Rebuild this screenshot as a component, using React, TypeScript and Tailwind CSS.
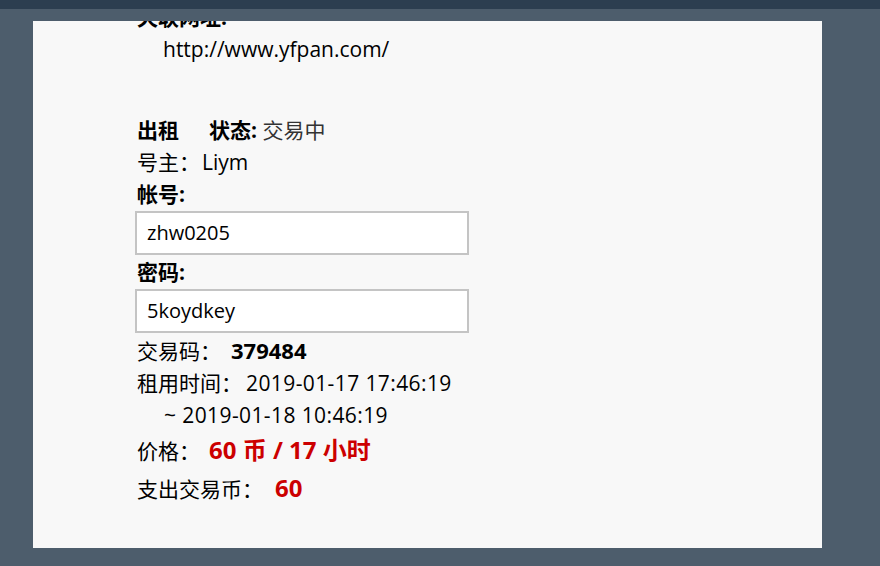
const font = {
  fontFamily: '"Open Sans", "Noto Sans CJK SC", sans-serif',
};

const Field: React.FC<{ value: string }> = ({ value }) => (
  <div className="-ml-[2px] my-px flex h-[44px] w-[334px] items-center border-2 border-[#c4c4c4] bg-white px-[10px] text-[20px] text-black">
    {value}
  </div>
);

export default function App() {
  return (
    <div className="flex h-[566px] w-full flex-col bg-[#4d5d6c]" style={font}>
      <div className="h-[9px] bg-[#2c3e50]" />
      <div className="ml-[33px] mt-[12px] h-[527px] w-[789px] overflow-hidden bg-[#f8f8f8]">
        <div className="-mt-[20px] flex flex-col pl-[104px] text-[21px] leading-[32px] text-black">
          <div className="font-bold">天联网址:</div>
          <div className="pl-[26px]">http://www.yfpan.com/</div>

          <div className="mt-[49px] flex gap-[30px]">
            <span className="font-bold">出租</span>
            <span>
              <span className="font-bold">状态:</span> <span className="text-[#333]">交易中</span>
            </span>
          </div>
          <div>
            号主：<span className="ml-[2px]">Liym</span>
          </div>
          <div className="font-bold">帐号:</div>
          <Field value="zhw0205" />
          <div className="font-bold">密码:</div>
          <Field value="5koydkey" />
          <div>
            交易码：<span className="ml-[10px] text-[22px] font-bold">379484</span>
          </div>
          <div>
            租用时间：<span className="ml-[4px] tracking-[0.4px]">2019-01-17 17:46:19</span>
          </div>
          <div className="pl-[27px] tracking-[0.4px]">~ 2019-01-18 10:46:19</div>
          <div className="leading-[38px]">
            价格：<span className="ml-[9px] text-[24px] font-bold text-[#cc0000]">60 币 / 17 小时</span>
          </div>
          <div className="leading-[36px]">
            支出交易币：<span className="ml-[12px] text-[24px] font-bold text-[#cc0000]">60</span>
          </div>
        </div>
      </div>
    </div>
  );
}
